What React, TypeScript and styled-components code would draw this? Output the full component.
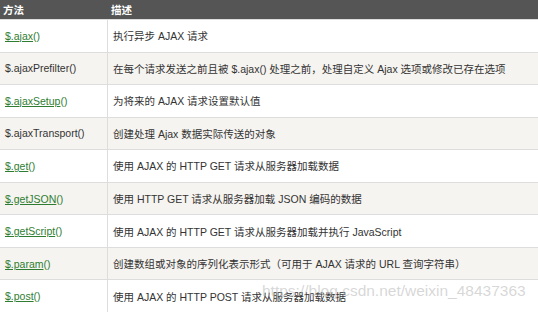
import React from 'react';
import styled, { createGlobalStyle } from 'styled-components';

const GlobalStyle = createGlobalStyle`
  html, body {
    margin: 0;
    padding: 0;
    background: #ffffff;
  }
  body {
    font-family: "Liberation Sans", "Noto Sans CJK SC", Arial, sans-serif;
  }
`;

const Wrapper = styled.div`
  position: relative;
  width: 538px;
  height: 312px;
  overflow: hidden;
`;

const Table = styled.div`
  display: grid;
  grid-template-columns: 107px 1fr;
  grid-template-rows: 19px repeat(9, 32.55px);
  width: 538px;
`;

const HeadCell = styled.div<{ $first?: boolean }>`
  background: #555555;
  color: #ffffff;
  font-size: 10.5px;
  font-weight: bold;
  display: flex;
  align-items: center;
  padding-left: 3px;
  border-left: ${p => (p.$first ? 'none' : '1px solid #555555')};
`;

const Cell = styled.div<{ $alt: boolean; $first?: boolean }>`
  background: ${p => (p.$alt ? '#f6f4f0' : '#ffffff')};
  border-top: 1px solid #dddddd;
  border-left: ${p => (p.$first ? 'none' : '1px solid #dddddd')};
  color: #333333;
  font-size: 10.5px;
  display: flex;
  align-items: center;
  padding-left: 5px;
  white-space: nowrap;
`;

const MethodLink = styled.a`
  color: #2e7d32;
  text-decoration: underline;
`;

const Parens = styled.span`
  color: #2e7d32;
`;

const Plain = styled.span`
  color: #333333;
`;

const Watermark = styled.div`
  position: absolute;
  left: 262px;
  top: 282px;
  font-size: 15.5px;
  color: rgba(175, 175, 175, 0.5);
  white-space: nowrap;
  pointer-events: none;
`;

type Row = { name: string; link: boolean; desc: string };

const rows: Row[] = [
  { name: '$.ajax', link: true, desc: '执行异步 AJAX 请求' },
  { name: '$.ajaxPrefilter', link: false, desc: '在每个请求发送之前且被 $.ajax() 处理之前，处理自定义 Ajax 选项或修改已存在选项' },
  { name: '$.ajaxSetup', link: true, desc: '为将来的 AJAX 请求设置默认值' },
  { name: '$.ajaxTransport', link: false, desc: '创建处理 Ajax 数据实际传送的对象' },
  { name: '$.get', link: true, desc: '使用 AJAX 的 HTTP GET 请求从服务器加载数据' },
  { name: '$.getJSON', link: true, desc: '使用 HTTP GET 请求从服务器加载 JSON 编码的数据' },
  { name: '$.getScript', link: true, desc: '使用 AJAX 的 HTTP GET 请求从服务器加载并执行 JavaScript' },
  { name: '$.param', link: true, desc: '创建数组或对象的序列化表示形式（可用于 AJAX 请求的 URL 查询字符串）' },
  { name: '$.post', link: true, desc: '使用 AJAX 的 HTTP POST 请求从服务器加载数据' },
];

const App: React.FC = () => {
  return (
    <Wrapper>
      <GlobalStyle />
      <Table>
        <HeadCell $first>方法</HeadCell>
        <HeadCell>描述</HeadCell>
        {rows.map((r, i) => (
          <React.Fragment key={r.name}>
            <Cell $alt={i % 2 === 1} $first>
              {r.link ? (
                <>
                  <MethodLink href="#">{r.name}</MethodLink>
                  <Parens>()</Parens>
                </>
              ) : (
                <Plain>{r.name}()</Plain>
              )}
            </Cell>
            <Cell $alt={i % 2 === 1}>{r.desc}</Cell>
          </React.Fragment>
        ))}
      </Table>
      <Watermark>https://blog.csdn.net/weixin_48437363</Watermark>
    </Wrapper>
  );
};

export default App;
